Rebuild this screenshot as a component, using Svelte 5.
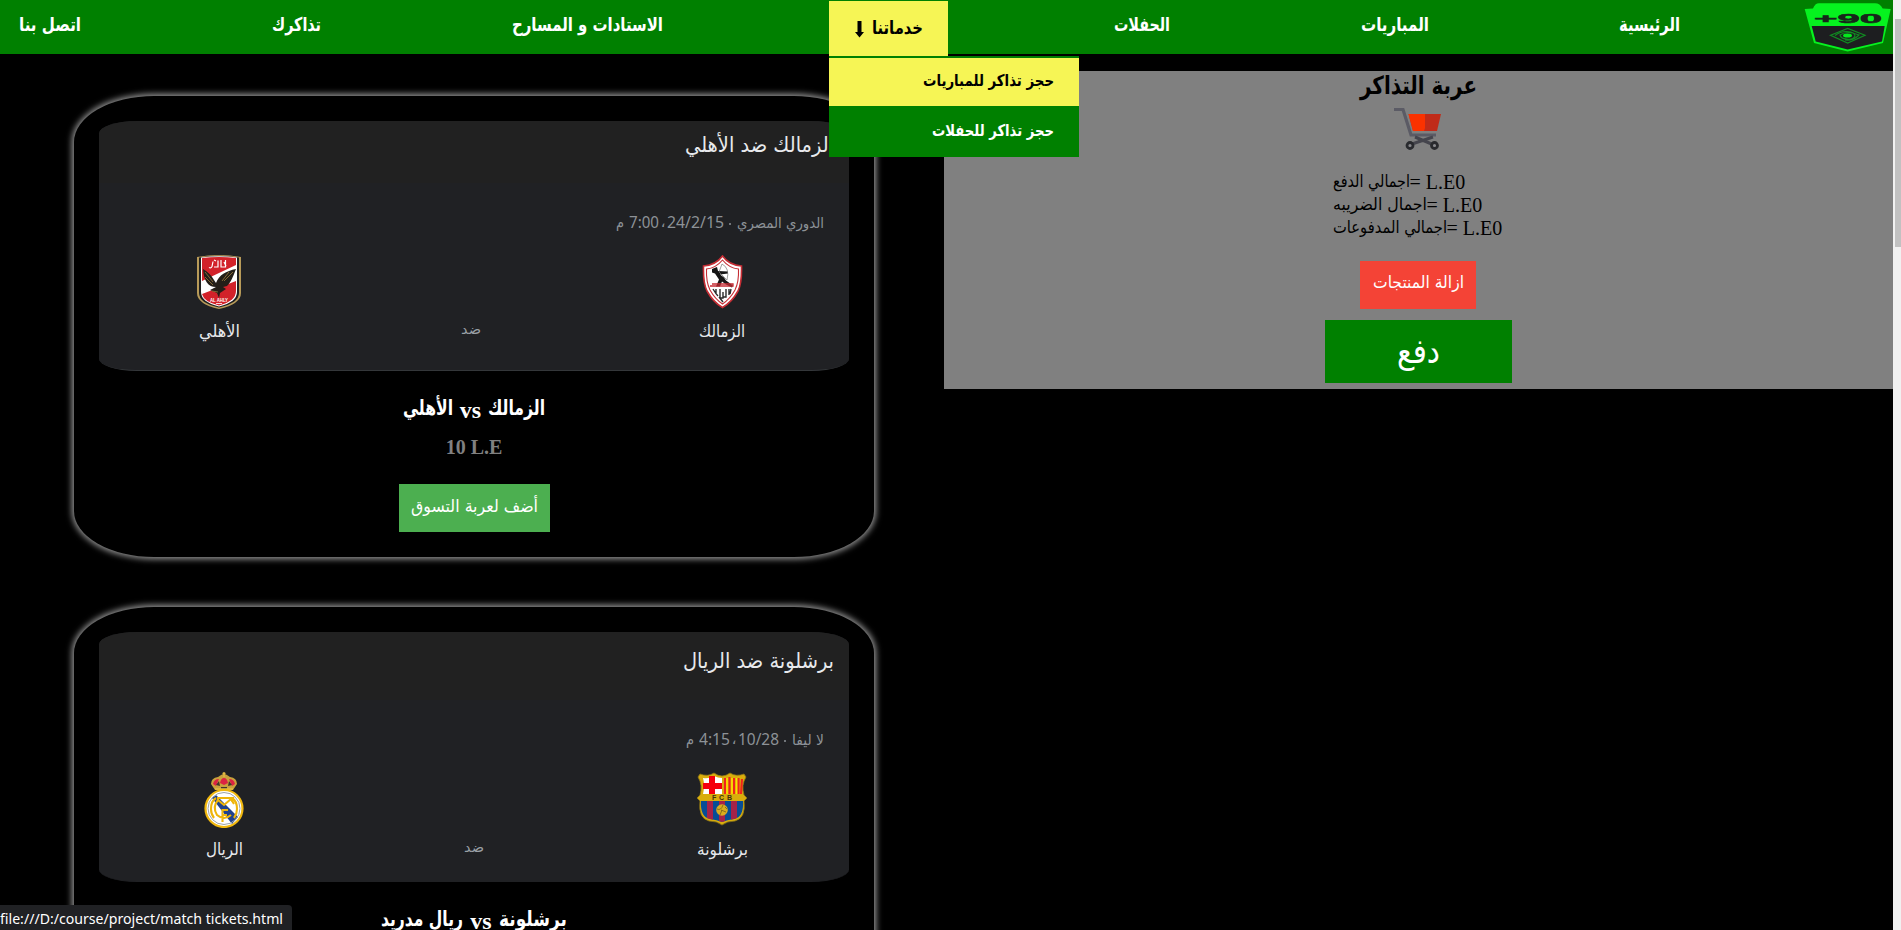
<script>
  const matches = [
    {
      id: 'zamalek-ahly',
      title: 'الزمالك ضد الأهلي', titleW: 149,
      league: 'الدوري المصري', leagueW: 87,
      date: '24/2/15', dateW: 57, time: '7:00', timeW: 30,
      home: 'الزمالك', homeW: 46, away: 'الأهلي', awayW: 41,
      nameRight: 'الزمالك', rightW: 57, nameLeft: 'الأهلي', leftW: 50,
      price: '10 L.E'
    },
    {
      id: 'barca-real',
      title: 'برشلونة ضد الريال', titleW: 151,
      league: 'لا ليفا', leagueW: 32,
      date: '10/28', dateW: 41, time: '4:15', timeW: 31,
      home: 'برشلونة', homeW: 51, away: 'الريال', awayW: 37,
      nameRight: 'برشلونة', rightW: 68, nameLeft: 'ريال مدريد', leftW: 82,
      price: '10 L.E'
    }
  ];

  const totals = [
    { label: 'اجمالي الدفع', w: 77 },
    { label: 'اجمال الضريبه', w: 94 },
    { label: 'اجمالي المدفوعات', w: 114 }
  ];

  // Stretches a line of text horizontally to fill the given width.
  function stretch(node, width) {
    const natural = node.getBoundingClientRect().width;
    if (natural > 0) node.style.transform = `scaleX(${width / natural})`;
  }
</script>

{#snippet fit(text, w)}
  <span class="fit" style="width: {w}px"><span class="run" dir="auto" use:stretch={w}>{text}</span></span>
{/snippet}

{#snippet ahly()}
  <svg width="44" height="54" viewBox="0 0 44 54">
    <path d="M0 2Q22-2 44 2V38Q44 49 22 54Q0 49 0 38Z" fill="#b89b59" />
    <path d="M2 2.5Q22-1 42 2.5V38Q42 48 22 52.500Q2 48 2 38Z" fill="#20201f" />
    <path d="M4 2.500Q22 0 40 2.500V37Q40 47 22 51.500Q4 47 4 37Z" fill="#fff" />
    <path d="M5 3Q22 1 39 3V10L5 26ZM5 39L39 26V36Q39 46 22 50.500Q7 47 5 39Z" fill="#d2222a" />
    <g fill="none" stroke="#fff" stroke-width="1.200"><path d="M12 12.500q2 1 3-1l1-5M17 12h4V7M21 5.500v7M24 5v7h4.500V5M27 7l2 4M17 5l2 1" /></g>
    <path d="M6 14C11 17 14 20 17 25L19 28C22 20 29 16 39 14C36 22 34 27 30 31L26 32L29 34L23 38L22 43L20 38L13 35L19 32C11 32 7 26 6 14Z" fill="#231e18" />
    <path d="M8 17l8 10M8 22l8 8M36 17l-9 9M32 17l-7 9M15 36l6 1" stroke="#8f713a" stroke-width=".9" />
    <text x="22" y="47" text-anchor="middle" font-size="4.800" font-weight="bold" fill="#fff" textLength="18" lengthAdjust="spacingAndGlyphs">AL AHLY</text>
    <path d="M19 48.500h6" stroke="#fff" stroke-width=".8" />
  </svg>
{/snippet}

{#snippet zamalek()}
  <svg width="41" height="54" viewBox="0 0 41 54">
    <path d="M20.500 1Q27 10 39.500 11Q40 28 36 36Q30 47 20.500 52.500Q11 47 5 36Q1 28 1.500 11Q14 10 20.500 1Z" fill="#fff" stroke="#c52d34" stroke-width="1.600" />
    <path d="M20.500 5Q27 13 36.500 14Q37 27 33 35Q28 44 20.500 49Q13 44 8 35Q4 27 4.500 14Q14 13 20.500 5Z" fill="#fff" stroke="#c52d34" stroke-width="1.100" />
    <path d="M10 14l5-2 1 4 10 .5v2l-8 1 4 3 2 3 7 5-1 2-6-3-4-3-2 5h-4l3-7-4-6-3-1Z" fill="#151515" />
    <path d="M20 9Q28 13 25 25M20 9l-3 8 8 8" fill="none" stroke="#777" stroke-width=".7" />
    <path d="M10 29h21v2H8" fill="none" stroke="#c52d34" stroke-width="1.300" />
    <path d="M11 34q3 5 5 7M14 34v5M18 34v9h3v-6M24 34v8h-3M27 34v6M29 34l-1 5M17 42l4 5" fill="none" stroke="#2a2a2a" stroke-width="1.400" />
  </svg>
{/snippet}

{#snippet real()}
  <svg width="40" height="56" viewBox="0 0 40 56">
    <path d="M11 18L7 12Q7 6 14 5Q18 2 20 2Q22 2 26 5Q33 6 33 12L29 18Z" fill="#c9a13c" />
    <path d="M9 12Q10 7 15 7L12 14ZM16 11Q17 6 20 6Q23 6 24 11L20 13ZM25 7Q30 7 31 12L28 14Z" fill="#dc2343" />
    <path d="M12 13l3-4 1 5ZM28 13l-3-4-1 5ZM17 15h6v2h-6Z" fill="#43342c" />
    <path d="M20 0v5M18.500 1.500h3M11 17h18" stroke="#e4bb42" stroke-width="1.300" />
    <circle cx="20" cy="36.500" r="18.500" fill="#fff" stroke="#f0b70e" stroke-width="2.200" />
    <path d="M8 26l4-3 22 22-6 7Z" fill="#20428d" />
    <circle cx="20" cy="36.500" r="16" fill="none" stroke="#9ba3ab" stroke-width="1" />
    <path d="M12 26Q7 29 7 37Q7 42 10 46M28 26Q33 29 33 37Q33 42 30 46M27 43Q20 49 13 43Q8 35 14 28L20 33L27 27L30 32M14 28V26H29L28 30M18.500 50V38H24M18.500 43H23" fill="none" stroke="#eeb50b" stroke-width="2.100" />
  </svg>
{/snippet}

{#snippet barca()}
  <svg width="52" height="54" viewBox="0 0 52 54">
    <defs><clipPath id="lowerField"><path d="M5 29H47Q48 45 38 47Q31 48 26 50Q21 48 14 47Q4 45 5 29Z" /></clipPath></defs>
    <path d="M4 2Q12 5 18 1Q22 4 26 4Q30 4 34 1Q40 5 48 2L50 5Q45 13 48 23L51 26L48 29Q50 46 39 49Q31 49 26 53Q21 49 13 49Q2 46 4 29L1 26L4 23Q7 13 2 5Z" fill="#d9ad0c" stroke="#8e7615" stroke-width=".8" />
    <path d="M7 6Q13 7 18 4Q22 6 26 6V22H7Q9 13 7 6Z" fill="#fff" />
    <path d="M13 4h6v18h-6ZM7 11h19v6H7Z" fill="#f5000c" />
    <path d="M29 6v16M33.500 5v17M38 6v16M42.500 6v16M46 7l-1 15" stroke="#f1231c" stroke-width="2.100" />
    <path d="M31 6v16M36 6v16M40.500 6v16" stroke="#ffdf00" stroke-width="1.600" />
    <text x="26" y="28" text-anchor="middle" font-size="7" font-weight="bold" fill="#3c3310" textLength="20">FCB</text>
    <g clip-path="url(#lowerField)">
      <path d="M4 29H48V51H4Z" fill="#064d96" />
      <path d="M11 29h6v22h-6ZM23 29h6v22h-6ZM35 29h6v22h-6Z" fill="#a52249" />
    </g>
    <circle cx="26" cy="38" r="5.800" fill="#d9ad1e" />
    <path d="M21 37q4 2 6-4M25 38l5 2M24 43l2-5M29 35l2 2" fill="none" stroke="#765f19" stroke-width=".8" />
  </svg>
{/snippet}

<div class="window">
  <div class="page">
    <nav>
      <svg class="logo" width="90" height="54" viewBox="0 0 90 54">
        <path d="M10 8.500Q12 3.300 16 3.300H72Q77 3.300 79.700 8.500L87.700 9L80 43L44.700 51.500L11 43L1.700 9Z" fill="#06f21f" />
        <path d="M8.700 26H81.700L79 41.500L44.700 49.500L12.700 41.500Z" fill="#1d1e20" />
        <text x="11" y="23" font-size="12.500" font-weight="bold" fill="#17251a" stroke="#17251a" stroke-width=".5" textLength="68" lengthAdjust="spacingAndGlyphs">+90</text>
        <path d="M27.500 35.300L44.700 28.500L62 35.300L44.700 43Z" fill="none" stroke="#118c22" stroke-width="1.200" />
        <path d="M32 35.500Q38 31 44 31.500Q52 32 52 36Q50 40 44 39Q38 39 37 35Q44 30 56 35Q50 41 42 40" fill="none" stroke="#118c22" stroke-width="1.100" />
        <ellipse cx="44.500" cy="35.500" rx="4.500" ry="2" fill="#04e81d" />
      </svg>
      <a class="first" href="#home">{@render fit('الرئيسية', 61)}</a>
      <a href="#matches">{@render fit('المباريات', 68)}</a>
      <a href="#parties">{@render fit('الحفلات', 56)}</a>
      <div class="services">
        <div class="trigger">
          {@render fit('خدماتنا', 51)}
          <svg width="9" height="17" viewBox="0 0 9 17"><path d="M2.500 0h4v11H9L4.500 16.500L0 11h2.500Z" /></svg>
        </div>
        <div class="menu">
          <div class="entry active">{@render fit('حجز تذاكر للمباريات', 131)}</div>
          <div class="entry">{@render fit('حجز تذاكر للحفلات', 122)}</div>
        </div>
      </div>
      <a href="#venues">{@render fit('الاستادات و المسارح', 151)}</a>
      <a href="#tickets">{@render fit('تذاكرك', 49)}</a>
      <a href="#contact">{@render fit('اتصل بنا', 62)}</a>
    </nav>

    <main>
      <section class="list">
        {#each matches as m, i}
          <article>
            <div class="poster" class:second={i === 1}>
              <div class="head">{@render fit(m.title, m.titleW)}</div>
              <div class="info">
                {@render fit(m.league, m.leagueW)}
                <i class="dot"></i>
                <span class="num">{@render fit(m.date, m.dateW)}</span>
                <span class="comma">،</span>
                <span class="num">{@render fit(m.time, m.timeW)}</span>
                <span class="pm">{@render fit('م', 8)}</span>
              </div>
              <div class="teams">
                <div class="team">
                  <div class="crest">{#if i === 0}{@render ahly()}{:else}{@render real()}{/if}</div>
                  {@render fit(m.away, m.awayW)}
                </div>
                <div class="versus">{@render fit('ضد', 20)}</div>
                <div class="team">
                  <div class="crest">{#if i === 0}{@render zamalek()}{:else}{@render barca()}{/if}</div>
                  {@render fit(m.home, m.homeW)}
                </div>
              </div>
            </div>
            <h3>{@render fit(m.nameRight, m.rightW)}<span class="vs">vs</span>{@render fit(m.nameLeft, m.leftW)}</h3>
            <p class="price">{m.price}</p>
            <button class="add">{@render fit('أضف لعربة التسوق', 127)}</button>
          </article>
        {/each}
      </section>

      <aside>
        <h2>{@render fit('عربة التذاكر', 117)}</h2>
        <svg class="cart" width="48" height="42" viewBox="0 0 48 42">
          <path d="M0 1.500H9L17 27H42" fill="none" stroke="#5b5b65" stroke-width="3.200" />
          <path d="M14.500 6H47L43 23H19Z" fill="#c02b19" />
          <path d="M14.500 6H31V20L30 23H19Z" fill="#fa3200" />
          <path d="M18 36L39 29M21 29L40 37" stroke="#45454d" stroke-width="3" />
          <g fill="#88888c" stroke="#292a2e" stroke-width="2.800"><circle cx="16" cy="37.500" r="3" /><circle cx="40.500" cy="37.500" r="3" /></g>
        </svg>
        <div class="totals">
          {#each totals as t}
            <div><span class="label">{@render fit(t.label, t.w)}</span><span class="sum">= L.E0</span></div>
          {/each}
        </div>
        <button class="clear">{@render fit('ازالة المنتجات', 91)}</button>
        <button class="pay">{@render fit('دفع', 43)}</button>
      </aside>
    </main>
  </div>
  <div class="scrollbar"><div class="thumb"></div></div>
  <div class="status">{@render fit('file:///D:/course/project/match tickets.html', 283)}</div>
</div>

<style>
  :global(body) { background: #000; overflow: hidden; }
  .window { position: relative; display: flex; width: 1901px; height: 930px; overflow: hidden; background: #000; font-family: "DejaVu Sans", sans-serif; line-height: 30px; }
  .page { width: 1893px; flex: none; }
  svg { display: block; flex: none; }
  .fit { display: block; direction: ltr; white-space: nowrap; flex: none; }
  .run { display: inline-block; transform-origin: 0 0; }
  nav { direction: rtl; display: flex; align-items: flex-start; gap: 190.7px; height: 54px; background: #008000; font-weight: bold; font-size: 19px; }
  nav a { color: #fff; text-decoration: none; padding-top: 9px; }
  .logo { direction: ltr; font-family: "Liberation Sans", sans-serif; }
  nav .first { margin-right: -68px; }
  .services { position: relative; width: 119px; height: 55px; margin: 1px -25.1px 0 -24px; }
  .trigger { display: flex; gap: 8px; box-sizing: border-box; height: 55px; padding: 12px 25px 0 0; background: #f6f555; color: #000; font-size: 18px; }
  .trigger svg { margin-top: 8px; }
  .menu { position: absolute; z-index: 2; top: 55px; left: 0; width: 250px; border-top: 2px solid #008000; background: #008000; color: #fff; font-size: 16px; }
  .entry { box-sizing: border-box; height: 51px; padding-right: 25px; line-height: 49px; }
  .entry.active { height: 48px; line-height: 46px; background: #f6f555; color: #000; }
  main { display: flex; justify-content: space-between; align-items: flex-start; }
  .list { display: flex; flex-direction: column; gap: 50px; padding: 42px 0 0 74px; }
  article { display: flex; flex-direction: column; align-items: center; box-sizing: border-box; width: 800px; height: 461px; padding-top: 25px; border-radius: 10%; box-shadow: 0 0 6px 2px #999; background: #000; }
  .poster { width: 750px; height: 250px; box-sizing: border-box; border-radius: 5%; overflow: hidden; background: #202124; border-bottom: 1px solid #34373a; color: #e8eaed; flex: none; }
  .poster.second { border-bottom-color: #202124; }
  .head { display: flex; direction: rtl; height: 62px; box-sizing: border-box; padding: 9px 15px 0 0; background: #212121; font-size: 21px; }
  .second .head { height: 68px; padding-top: 14px; }
  .info { display: flex; direction: rtl; align-items: baseline; height: 30px; padding: 24px 25px 0 0; color: #8d9297; font-size: 14.5px; }
  .num { font-family: "Noto Sans", sans-serif; font-size: 16px; }
  .dot { width: 2px; height: 2px; margin: 4px 6px 0 5px; border-radius: 50%; background: #8d9297; align-self: center; }
  .comma { position: relative; top: -1px; width: 8px; text-align: center; }
  .pm { margin-right: 5px; }
  .teams { display: grid; grid-template-columns: 240px 264px 238px; padding-top: 18px; font-size: 16.5px; }
  .second .teams { grid-template-columns: 250px 250px 246px; }
  .team { display: flex; flex-direction: column; align-items: center; }
  .crest { height: 54px; margin-bottom: 8px; font-family: "Liberation Sans", sans-serif; }
  .second .crest { margin-bottom: 9px; }
  .versus { display: flex; justify-content: center; padding-top: 59px; color: #9aa0a6; font-size: 13.5px; }
  .second .versus { padding-top: 60px; }
  h3 { display: flex; direction: rtl; gap: 7px; margin: 22px 0 0; height: 30px; color: #fff; font-size: 21px; }
  .vs { font-family: "Liberation Serif", serif; font-size: 24px; padding-top: 2px; }
  .price { margin: 9px 0 22px; color: #808080; font: bold 20px/30px "Liberation Serif", serif; }
  button { display: flex; justify-content: center; align-items: flex-start; padding: 0; border: 0; color: #fff; font-family: "DejaVu Sans", sans-serif; }
  .add { width: 151px; height: 48px; background: #4caf50; font-size: 17px; line-height: 44px; }
  aside { display: flex; flex-direction: column; align-items: center; box-sizing: border-box; width: 949px; height: 318px; padding-right: 1px; margin-top: 17px; background: #808080; }
  h2 { margin: 0 0 7px; font-size: 25px; height: 30px; }
  .totals { width: 171px; margin: 21px 0; line-height: 23px; font-size: 17px; }
  .totals div { display: flex; align-items: baseline; height: 23px; }
  .label { position: relative; top: -2px; }
  .sum { font-family: "Liberation Serif", serif; font-size: 20px; white-space: nowrap; }
  .clear { width: 116px; height: 48px; background: #f44336; font-size: 17px; line-height: 43px; }
  .pay { width: 187px; height: 63px; margin-top: 11px; background: #008000; font-size: 34px; line-height: 63px; }
  .scrollbar { width: 8px; background: #f1f1f1; padding: 19px 0 0 2px; box-sizing: border-box; }
  .thumb { height: 228px; background: #c1c1c1; }
  .status { position: absolute; left: 0; bottom: 0; width: 292px; height: 25px; line-height: 26px; border-radius: 0 4px 0 0; background: #202124; color: #fff; font-family: "Noto Sans", sans-serif; font-size: 15px; }
</style>
